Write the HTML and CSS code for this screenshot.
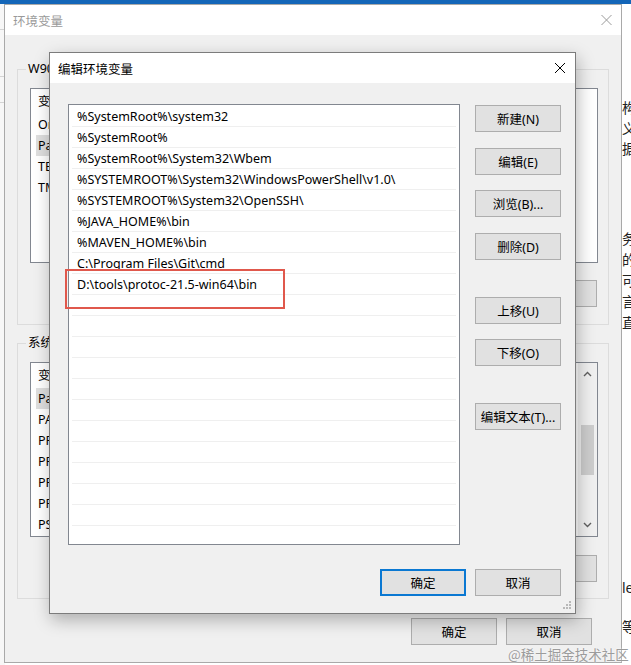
FILE: index.html
```html
<!DOCTYPE html>
<html lang="zh-CN">
<head>
<meta charset="utf-8">
<title>编辑环境变量</title>
<link rel="stylesheet" href="styles.css">
</head>
<body>
<div class="desk">
  <div class="topbar"></div>
  <div class="leftwin">
    <div class="lw-cell"></div>
    <div class="lw-cell tall"></div>
    <div class="lw-cell"></div>
  </div>
  <div class="rightwin">
    <div class="rw-b1"><div>构</div><div>义</div><div>据</div></div>
    <div class="rw-b2"><div>务</div><div>的</div><div>可</div><div>言</div><div>直</div></div>
    <div class="rw-b3">le</div>
    <div class="rw-b4">等</div>
  </div>

  <section class="envwin">
    <header class="env-title">
      <span class="title">环境变量</span>
      <svg class="close" width="11" height="10" viewBox="0 0 11 10"><path d="M0.5 0 L10.5 10 M10.5 0 L0.5 10" stroke="#9a9a9a" stroke-width="1"/></svg>
    </header>
    <div class="env-body">
      <fieldset class="group g-user">
        <legend>W906 的用户变量(U)</legend>
        <div class="vlist">
          <div class="vhead">变量</div>
          <div class="vrow">OneDrive</div>
          <div class="vrow sel">Path</div>
          <div class="vrow">TEMP</div>
          <div class="vrow">TMP</div>
        </div>
        <div class="grp-btns">
          <button class="btn">新建(N)...</button>
          <button class="btn">编辑(E)...</button>
          <button class="btn">删除(D)</button>
        </div>
      </fieldset>
      <fieldset class="group g-sys">
        <legend>系统变量(S)</legend>
        <div class="vlist scroll">
          <div class="vrows">
            <div class="vhead">变量</div>
            <div class="vrow sel">Path</div>
            <div class="vrow">PATHEXT</div>
            <div class="vrow">PROCESSOR_ARCHITECTURE</div>
            <div class="vrow">PROCESSOR_IDENTIFIER</div>
            <div class="vrow">PROCESSOR_LEVEL</div>
            <div class="vrow">PROCESSOR_REVISION</div>
            <div class="vrow">PSModulePath</div>
          </div>
          <div class="sbar">
            <svg class="arrow" width="9" height="6" viewBox="0 0 9 6"><path d="M1 5 L4.5 1.5 L8 5" fill="none" stroke="#606060" stroke-width="1.4"/></svg>
            <div class="track"><div class="thumb"></div></div>
            <svg class="arrow" width="9" height="6" viewBox="0 0 9 6"><path d="M1 1 L4.5 4.5 L8 1" fill="none" stroke="#606060" stroke-width="1.4"/></svg>
          </div>
        </div>
        <div class="grp-btns">
          <button class="btn">新建(W)...</button>
          <button class="btn">编辑(I)...</button>
          <button class="btn">删除(L)</button>
        </div>
      </fieldset>
      <div class="env-foot">
        <button class="btn">确定</button>
        <button class="btn">取消</button>
      </div>
    </div>
  </section>

  <section class="editdlg">
    <header class="dlg-title">
      <span class="title">编辑环境变量</span>
      <svg class="close" width="10" height="10" viewBox="0 0 10 10"><path d="M0 0 L10 10 M10 0 L0 10" stroke="#000" stroke-width="1"/></svg>
    </header>
    <div class="dlg-body">
      <div class="dlg-main">
        <div class="plist">
          <div class="prow">%SystemRoot%\system32</div>
          <div class="prow">%SystemRoot%</div>
          <div class="prow">%SystemRoot%\System32\Wbem</div>
          <div class="prow">%SYSTEMROOT%\System32\WindowsPowerShell\v1.0\</div>
          <div class="prow">%SYSTEMROOT%\System32\OpenSSH\</div>
          <div class="prow">%JAVA_HOME%\bin</div>
          <div class="prow">%MAVEN_HOME%\bin</div>
          <div class="prow">C:\Program Files\Git\cmd</div>
          <div class="prow">D:\tools\protoc-21.5-win64\bin</div>
          <div class="prow"></div>
          <div class="prow"></div>
          <div class="prow"></div>
          <div class="prow"></div>
          <div class="prow"></div>
          <div class="prow"></div>
          <div class="prow"></div>
          <div class="prow"></div>
          <div class="prow"></div>
          <div class="prow"></div>
          <div class="prow"></div>
        </div>
        <div class="bcol">
          <button class="btn b-new">新建(N)</button>
          <button class="btn b-edit">编辑(E)</button>
          <button class="btn b-browse">浏览(B)...</button>
          <button class="btn b-del">删除(D)</button>
          <button class="btn b-up">上移(U)</button>
          <button class="btn b-down">下移(O)</button>
          <button class="btn b-text">编辑文本(T)...</button>
        </div>
      </div>
      <div class="dlg-foot">
        <button class="btn default">确定</button>
        <button class="btn">取消</button>
      </div>
      <svg class="grip" width="9" height="9" viewBox="0 0 9 9">
        <rect x="6" y="0" width="2" height="2" fill="#b8b8b8"/>
        <rect x="3" y="3" width="2" height="2" fill="#b8b8b8"/>
        <rect x="6" y="3" width="2" height="2" fill="#b8b8b8"/>
        <rect x="0" y="6" width="2" height="2" fill="#b8b8b8"/>
        <rect x="3" y="6" width="2" height="2" fill="#b8b8b8"/>
        <rect x="6" y="6" width="2" height="2" fill="#b8b8b8"/>
      </svg>
    </div>
  </section>

  <div class="annot"></div>
  <div class="watermark">@稀土掘金技术社区</div>
</div>
</body>
</html>
```

FILE: styles.css
```css
* { box-sizing: border-box; }
html, body { margin: 0; padding: 0; }
body {
  width: 631px;
  height: 665px;
  overflow: hidden;
  background: #fff;
  font-family: "Noto Sans", "Noto Sans CJK SC", sans-serif;
  font-size: 12.5px;
  color: #000;
}
.desk {
  position: relative;
  width: 631px;
  height: 665px;
  overflow: hidden;
  background: #fff;
}
.topbar { height: 4px; background: #1466b8; }

/* window peeking at the left edge */
.leftwin {
  position: absolute;
  left: 0;
  top: 4px;
  width: 5px;
  height: 661px;
  background: #f7f7f7;
}
.lw-cell { height: 26px; border-bottom: 1px solid #d4d4d4; }
.lw-cell.tall { height: 47px; }

/* window peeking at the right edge */
.rightwin {
  position: absolute;
  left: 621px;
  top: 4px;
  width: 60px;
  height: 661px;
  padding-left: 1px;
  background: #fff;
  font-family: "Noto Sans CJK SC", sans-serif;
  font-size: 14px;
  color: #222;
  white-space: nowrap;
}
.rw-b1 { margin-top: 93px; line-height: 20.5px; }
.rw-b2 { margin-top: 69px; line-height: 21px; }
.rw-b3 { margin-top: 244px; line-height: 21px; font-family: "Noto Sans", sans-serif; }
.rw-b4 { margin-top: 18px; line-height: 21px; }

/* background window */
.envwin {
  position: absolute;
  left: 4px;
  top: 4px;
  width: 618px;
  height: 659px;
  border: 1px solid #a9a9a9;
  background: #f0f0f0;
  display: flex;
  flex-direction: column;
}
.env-title {
  height: 30px;
  flex: none;
  background: #fff;
  display: flex;
  align-items: center;
  justify-content: space-between;
  padding: 0 9px 0 8px;
}
.env-title .title { color: #9a9a9a; font-size: 12.5px; font-family: "Noto Sans CJK SC", sans-serif; }
.env-body { padding: 24px 12px 0 12px; }

.group {
  margin: 0;
  padding: 9px 10px 17px 12px;
  border: 1px solid #dcdcdc;
  min-width: 0;
}
.group legend {
  padding: 0 2px;
  margin-left: -4px;
  line-height: 20px;
  font-size: 12.5px;
  white-space: nowrap;
}
.g-sys { margin-top: 8px; padding-bottom: 16px; }

.vlist {
  height: 175px;
  background: #fff;
  border: 1px solid #828790;
  overflow: hidden;
}
.vlist.scroll { display: flex; }
.vrows { flex: 1; }
.vhead { height: 25px; line-height: 25px; padding-left: 7px; }
.vrow {
  width: 160px;
  height: 21px;
  line-height: 21px;
  margin: 0 5px;
  padding-left: 2px;
  white-space: nowrap;
}
.vrow.sel { background: #dedede; }

.sbar {
  width: 19px;
  flex: none;
  background: #f0f0f0;
  display: flex;
  flex-direction: column;
  align-items: center;
}
.sbar .arrow { margin: 8px 0; flex: none; }
.sbar .track { flex: 1; width: 100%; padding: 40px 3px 0 3px; }
.sbar .thumb { height: 50px; background: #cdcdcd; }

.grp-btns {
  display: flex;
  justify-content: flex-end;
  gap: 9px;
  margin-top: 17px;
  padding-right: 1px;
}
.g-sys .grp-btns { margin-top: 18px; }

.btn {
  height: 27px;
  width: 86px;
  padding: 0;
  margin: 0;
  background: #e1e1e1;
  border: 1px solid #adadad;
  font: inherit;
  color: #000;
  white-space: nowrap;
  flex: none;
}
.btn.default { border: 2px solid #0a78d2; }

.env-foot {
  display: flex;
  justify-content: flex-end;
  gap: 9px;
  margin-top: 19px;
  padding-right: 17px;
}

/* foreground dialog */
.editdlg {
  position: absolute;
  left: 49px;
  top: 52px;
  width: 527px;
  height: 562px;
  border: 1px solid #7c7c7c;
  background: #f0f0f0;
  box-shadow: 2px 6px 16px rgba(0, 0, 0, 0.28);
  display: flex;
  flex-direction: column;
}
.dlg-title {
  height: 30px;
  flex: none;
  background: #fff;
  display: flex;
  align-items: center;
  justify-content: space-between;
  padding: 0 10px 0 8px;
}
.dlg-title .title { font-size: 12.5px; font-family: "Noto Sans CJK SC", sans-serif; }
.dlg-body {
  position: relative;
  flex: 1;
  padding: 21px 14px 17px 18px;
}
.dlg-main { display: flex; gap: 15px; }
.plist {
  width: 392px;
  height: 441px;
  flex: none;
  background: #fff;
  border: 1px solid #828790;
  padding-top: 1px;
  overflow: hidden;
}
.prow {
  height: 21px;
  line-height: 21px;
  margin: 0 3px;
  padding-left: 5px;
  border-bottom: 1px solid #efefef;
  white-space: nowrap;
  overflow: hidden;
}
.bcol { display: flex; flex-direction: column; width: 86px; }
.b-new { margin-top: 1px; }
.b-edit { margin-top: 16px; }
.b-browse { margin-top: 15px; }
.b-del { margin-top: 16px; }
.b-up { margin-top: 37px; }
.b-down { margin-top: 15px; }
.b-text { margin-top: 37px; }

.dlg-foot {
  display: flex;
  justify-content: flex-end;
  gap: 9px;
  margin-top: 24px;
}
.grip { position: absolute; right: 3px; bottom: 3px; }

.annot {
  position: absolute;
  left: 65px;
  top: 269px;
  width: 220px;
  height: 40px;
  border: 2px solid #e0584c;
}
.watermark {
  position: absolute;
  left: 508px;
  top: 644px;
  font-family: "Noto Sans CJK SC", serif;
  font-size: 13.5px;
  line-height: 20px;
  color: #9c9c9c;
  white-space: nowrap;
  text-shadow: 0 0 2px #fff;
}
```
